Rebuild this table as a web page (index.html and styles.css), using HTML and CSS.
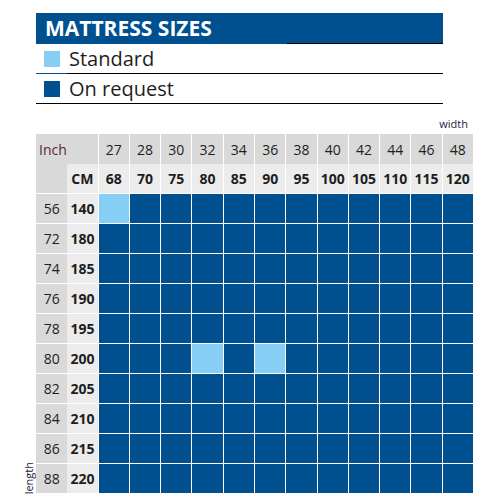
FILE: index.html
```html
<!DOCTYPE html>
<html lang="en">
  <head>
    <meta charset="UTF-8" />
    <link rel="stylesheet" href="styles.css">
  </head>
  <body>
    <div class="sheet">
      <div class="legend">
        <div class="legend-title">MATTRESS SIZES</div>
        <div class="legend-row legend-row--std">
          <span class="swatch swatch--std"></span>Standard
        </div>
        <div class="legend-row">
          <span class="swatch swatch--req"></span>On request
        </div>
      </div>

      <div class="axis-width">width</div>

      <div class="chart">
        <span class="axis-length">length</span>
        <div class="size-grid" id="sizeGrid">
          <div class="cell cell-corner">Inch</div>
          <div class="cell cell-inch-head">27</div>
          <div class="cell cell-inch-head">28</div>
          <div class="cell cell-inch-head">30</div>
          <div class="cell cell-inch-head">32</div>
          <div class="cell cell-inch-head">34</div>
          <div class="cell cell-inch-head">36</div>
          <div class="cell cell-inch-head">38</div>
          <div class="cell cell-inch-head">40</div>
          <div class="cell cell-inch-head">42</div>
          <div class="cell cell-inch-head">44</div>
          <div class="cell cell-inch-head">46</div>
          <div class="cell cell-inch-head">48</div>

          <div class="cell cell-blank"></div>
          <div class="cell cell-cm">CM</div>
          <div class="cell cell-cm">68</div>
          <div class="cell cell-cm">70</div>
          <div class="cell cell-cm">75</div>
          <div class="cell cell-cm">80</div>
          <div class="cell cell-cm">85</div>
          <div class="cell cell-cm">90</div>
          <div class="cell cell-cm">95</div>
          <div class="cell cell-cm">100</div>
          <div class="cell cell-cm">105</div>
          <div class="cell cell-cm">110</div>
          <div class="cell cell-cm">115</div>
          <div class="cell cell-cm">120</div>
        </div>
      </div>
    </div>

    <script>
      const lengths = [
        [56, 140], [72, 180], [74, 185], [76, 190], [78, 195],
        [80, 200], [82, 205], [84, 210], [86, 215], [88, 220]
      ];
      const widths = [68, 70, 75, 80, 85, 90, 95, 100, 105, 110, 115, 120];

      /* standard sizes as "length x width" in cm */
      const standard = ["140x68", "200x80", "200x90"];

      const grid = document.getElementById("sizeGrid");

      lengths.forEach(([inch, cm]) => {
        let html = `<div class="cell cell-inch">${inch}</div>`;
        html += `<div class="cell cell-cm">${cm}</div>`;
        widths.forEach((w) => {
          const kind = standard.includes(`${cm}x${w}`) ? "std" : "req";
          html += `<div class="cell cell-size cell-size--${kind}"></div>`;
        });
        grid.insertAdjacentHTML("beforeend", html);
      });
    </script>
  </body>
</html>
```

FILE: styles.css
```css
body {
  margin: 0;
  font-family: "Open Sans", "Noto Sans", sans-serif;
  color: #1e1e1e;
}

.sheet {
  padding: 13px 0 0 36px;
}

.legend {
  width: 407px;
}

.legend-title {
  height: 30px;
  line-height: 30px;
  padding-left: 9px;
  background-color: #00508f;
  color: white;
  font-size: 21px;
  font-weight: bold;
  border-bottom: 1px solid #000;
  border-image: linear-gradient(to right, #00508f 251px, #000 251px) 1;
}

.legend-row {
  display: flex;
  align-items: center;
  height: 29px;
  font-size: 20px;
  border-bottom: 1px solid #000;
}

.legend-row--std {
  border-image: linear-gradient(to right, #00508f 32px, #000 32px) 1;
}

.swatch {
  width: 16px;
  height: 16px;
  margin: 0 9px 0 8px;
}

.swatch--std {
  background-color: #87cef5;
}

.swatch--req {
  background-color: #00508f;
}

.axis-width {
  width: 438px;
  margin-top: 13px;
  padding: 0 6px 3px 0;
  box-sizing: border-box;
  text-align: right;
  font-size: 11px;
  line-height: 14px;
  color: #1a1a3a;
}

.chart {
  display: flex;
  margin-left: -14px;
}

.axis-length {
  align-self: flex-end;
  width: 14px;
  padding-bottom: 2px;
  writing-mode: vertical-rl;
  transform: rotate(180deg);
  font-size: 11px;
  line-height: 14px;
  text-align: left;
  color: #1a1a3a;
}

.size-grid {
  display: grid;
  grid-template-columns: repeat(14, 1fr);
  grid-auto-rows: 30px;
  width: 438px;
}

.cell {
  box-sizing: border-box;
  display: flex;
  align-items: center;
  justify-content: center;
  font-size: 14px;
  border-right: 1px solid #fff;
  border-bottom: 1px solid #fff;
}

.cell-corner {
  grid-column: span 2;
  justify-content: flex-start;
  padding-left: 3px;
  background-color: #d9d9d9;
  color: #5b1f3f;
  border-bottom: 0;
}

.cell-inch-head {
  background-color: #d9d9d9;
  border-bottom: 0;
}

.cell-blank,
.cell-inch {
  background-color: #d9d9d9;
  border-right: 0;
}

.cell-cm {
  background-color: #ececec;
  font-weight: bold;
}

.cell-size--req {
  background-color: #00508f;
}

.cell-size--std {
  background-color: #87cef5;
}
```
